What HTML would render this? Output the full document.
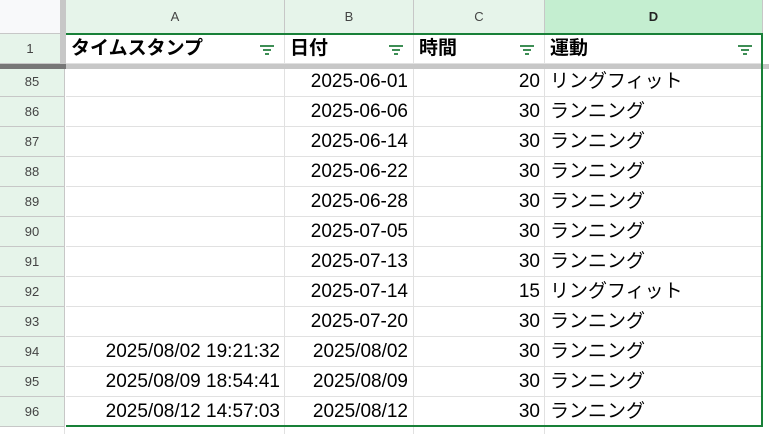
<!DOCTYPE html>
<html style="overflow:hidden;height:434px"><head><meta charset="utf-8"><style>
body{margin:0;width:769px;height:434px;overflow:hidden;background:#fff;font-family:"Liberation Sans","Noto Sans CJK JP",sans-serif;position:relative}
div{position:absolute;box-sizing:border-box}
.ch{top:0;height:34px;background:#e6f4ea;color:#444;font-size:13px;text-align:center;line-height:34px;border-right:1px solid #c7c7c7;border-bottom:1px solid #c7c7c7}
.rh{left:0;width:65px;background:#e6f4ea;color:#444;font-size:13px;text-align:center;border-bottom:1px solid #c7c7c7;border-right:1px solid #c7c7c7;line-height:30px;height:30px}
.c{height:30px;line-height:30px;font-size:19px;color:#000;border-right:1px solid #e1e1e1;border-bottom:1px solid #e1e1e1;white-space:nowrap;padding:0 5px;overflow:hidden}
.r{text-align:right}
.h{font-weight:bold;font-size:19px;overflow:visible}
.f{width:14px;height:10px;top:10px}
.f i{position:absolute;height:2px;background:#3e8e55;display:block}
</style></head><body>
<div style="left:0;top:0;width:61px;height:34px;background:#f8f9fa;border-right:1px solid #c7c7c7;border-bottom:1px solid #c7c7c7"></div>
<div style="left:61px;top:0;width:5px;height:64px;background:#c7c7c7"></div>
<div class="ch" style="left:66px;width:219px">A</div>
<div class="ch" style="left:285px;width:129px">B</div>
<div class="ch" style="left:414px;width:131px">C</div>
<div class="ch" style="left:545px;width:218px;background:#c4eed0;font-weight:bold;color:#222">D</div>
<div class="ch" style="left:763px;width:6px;background:#fff;border:none"></div>
<div class="rh" style="top:34px;width:61px">1</div>
<div class="c h" style="left:66px;top:34px;width:219px">タイムスタンプ<div class="f" style="right:10px"><i style="left:0;top:1px;width:14px"></i><i style="left:3px;top:5px;width:8px"></i><i style="left:5px;top:9px;width:4px"></i></div></div>
<div class="c h" style="left:285px;top:34px;width:129px">日付<div class="f" style="right:10px"><i style="left:0;top:1px;width:14px"></i><i style="left:3px;top:5px;width:8px"></i><i style="left:5px;top:9px;width:4px"></i></div></div>
<div class="c h" style="left:414px;top:34px;width:131px">時間<div class="f" style="right:10px"><i style="left:0;top:1px;width:14px"></i><i style="left:3px;top:5px;width:8px"></i><i style="left:5px;top:9px;width:4px"></i></div></div>
<div class="c h" style="left:545px;top:34px;width:218px">運動<div class="f" style="right:10px"><i style="left:0;top:1px;width:14px"></i><i style="left:3px;top:5px;width:8px"></i><i style="left:5px;top:9px;width:4px"></i></div></div>
<div id="rows"></div>
<script>
var d=[[85,"","2025-06-01",20,"リングフィット"],[86,"","2025-06-06",30,"ランニング"],[87,"","2025-06-14",30,"ランニング"],[88,"","2025-06-22",30,"ランニング"],[89,"","2025-06-28",30,"ランニング"],[90,"","2025-07-05",30,"ランニング"],[91,"","2025-07-13",30,"ランニング"],[92,"","2025-07-14",15,"リングフィット"],[93,"","2025-07-20",30,"ランニング"],[94,"2025/08/02 19:21:32","2025/08/02",30,"ランニング"],[95,"2025/08/09 18:54:41","2025/08/09",30,"ランニング"],[96,"2025/08/12 14:57:03","2025/08/12",30,"ランニング"]];
var h="";d.forEach(function(r,i){var t=67+i*30,tt=i==0?69:t,hh=i==0?28:30,lh=i==0?26:30;
var s='top:'+tt+'px;height:'+hh+'px;line-height:'+lh+'px;';
h+='<div class="rh" style="'+s+'">'+r[0]+'</div>';
h+='<div class="c r" style="left:66px;'+s+'width:219px;padding-right:4px">'+r[1]+'</div>';
h+='<div class="c r" style="left:285px;'+s+'width:129px">'+r[2]+'</div>';
h+='<div class="c r" style="left:414px;'+s+'width:131px;padding-right:4px">'+r[3]+'</div>';
h+='<div class="c" style="left:545px;'+s+'width:218px;padding-left:5px">'+r[4]+'</div>';});
h+='<div class="rh" style="top:427px;height:7px;background:#fff;border:none;border-right:1px solid #e1e1e1"></div><div class="c" style="left:66px;top:427px;height:7px;width:219px;border-bottom:none"></div><div class="c" style="left:285px;top:427px;height:7px;width:129px;border-bottom:none"></div><div class="c" style="left:414px;top:427px;height:7px;width:131px;border-bottom:none"></div>';
document.getElementById("rows").outerHTML=h;
</script>
<div style="left:0;top:64px;width:66px;height:5px;background:#777"></div>
<div style="left:66px;top:64px;width:703px;height:5px;background:#c7c7c7"></div>
<div style="left:66px;top:33px;width:697px;height:2px;background:#188038"></div>
<div style="left:761px;top:33px;width:2px;height:394px;background:#188038"></div>
<div style="left:66px;top:425px;width:697px;height:2px;background:#188038"></div>
</body></html>
